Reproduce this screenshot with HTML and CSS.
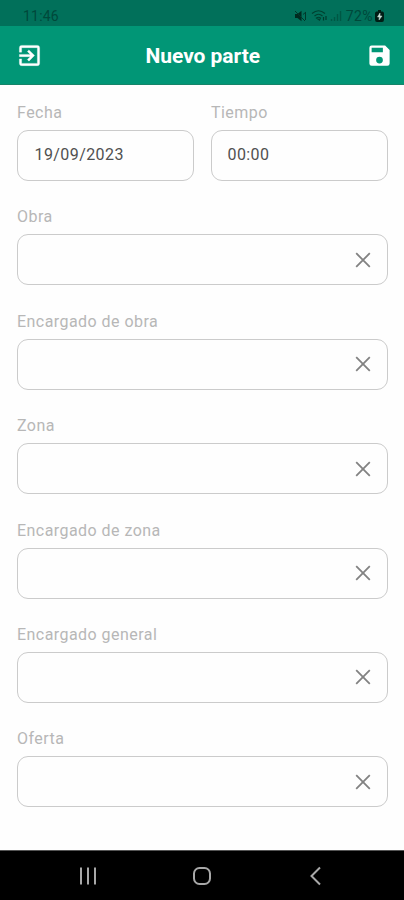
FILE: index.html
```html
<!DOCTYPE html>
<html lang="es">
<head>
<meta charset="utf-8">
<title>Nuevo parte</title>
<link rel="stylesheet" href="styles.css">
</head>
<body>
<svg class="defs" aria-hidden="true">
  <symbol id="clear" viewBox="0 0 16 16"><path d="M1.200 1.200 14.800 14.800M14.800 1.200 1.200 14.800" fill="none" stroke="currentColor" stroke-width="1.800"/></symbol>
</svg>
<div class="status">
  <span class="clock">11:46</span>
  <div class="indicators">
    <svg class="mute" viewBox="0 0 13 12"><path d="M1 4h2.500L7.500 .8v10.400L3.500 8H1z" fill="#002b20"/><path d="M1 1l10 10M9 4.500l3-2.500M11.500 2v8" stroke="#00392b" fill="none"/></svg>
    <svg class="wifi" viewBox="0 0 18 13"><path d="M1 4.500Q7.500-1 14 4.500M3.500 7Q7.500 3.500 11.500 7M5.500 9Q7.500 7.500 9.500 9L8.500 11z" fill="none" stroke="#00402f" stroke-width="1.200"/><path d="M12.500 8v3.500M15 7v4" stroke="#00392b" stroke-width="1.200"/></svg>
    <svg class="signal" viewBox="0 0 12 11"><path d="M1.500 9v2M4.500 7v4M7.500 4v7M10.500 1v10" stroke="#005744" stroke-width="1.400"/></svg>
    <span class="percent">72%</span>
    <svg class="battery" viewBox="0 0 9 12"><path d="M3 0h3v1.500h1.500Q9 2 9 3.500v6Q9 12 7 12H2Q0 12 0 9.500v-6Q0 2 1.500 1.500H3z" fill="#001d15"/><path d="M5 3 2.500 7h1.800L4 10l3-4H5z" fill="#c5ddd5" stroke="#c5ddd5" stroke-width=".5"/></svg>
  </div>
</div>
<header class="appbar">
  <svg class="action" viewBox="0 0 24 24"><path fill="#fff" stroke="#fff" stroke-width=".3" d="M10.090 15.590 11.500 17l5-5-5-5-1.410 1.410L12.670 11H3v2h9.670zM19 3H5a2 2 0 0 0-2 2v4h2V5h14v14H5v-4H3v4a2 2 0 0 0 2 2h14a2 2 0 0 0 2-2V5a2 2 0 0 0-2-2z"/></svg>
  <h1>Nuevo parte</h1>
  <svg class="action" viewBox="0 0 24 24"><path fill="#fff" d="M17 3H5a2 2 0 0 0-2 2v14a2 2 0 0 0 2 2h14a2 2 0 0 0 2-2V7zm-5 16a3 3 0 1 1 0-6 3 3 0 0 1 0 6zm3-10H5V5h10z"/></svg>
</header>
<main>
  <div class="pair">
    <div class="field"><div class="label">Fecha</div><div class="box"><span>19/09/2023</span></div></div>
    <div class="field"><div class="label">Tiempo</div><div class="box time"><span>00:00</span></div></div>
  </div>
  <div class="field"><div class="label">Obra</div><div class="box"><svg class="clear"><use href="#clear"/></svg></div></div>
  <div class="field"><div class="label">Encargado de obra</div><div class="box"><svg class="clear"><use href="#clear"/></svg></div></div>
  <div class="field"><div class="label">Zona</div><div class="box"><svg class="clear"><use href="#clear"/></svg></div></div>
  <div class="field"><div class="label">Encargado de zona</div><div class="box"><svg class="clear"><use href="#clear"/></svg></div></div>
  <div class="field"><div class="label">Encargado general</div><div class="box"><svg class="clear"><use href="#clear"/></svg></div></div>
  <div class="field"><div class="label">Oferta</div><div class="box"><svg class="clear"><use href="#clear"/></svg></div></div>
</main>
<nav class="navbar">
  <svg viewBox="0 0 20 20"><path d="M3 1.500v17M10 1.500v17M17 1.500v17" stroke="#a8a8a8" stroke-width="2"/></svg>
  <svg viewBox="0 0 20 20"><rect x="2" y="2" width="16" height="16" rx="5.500" fill="none" stroke="#a8a8a8" stroke-width="2"/></svg>
  <svg viewBox="0 0 20 20"><path d="M15 1.500 6.500 10l8.500 8.500" fill="none" stroke="#a8a8a8" stroke-width="2"/></svg>
</nav>
</body>
</html>
```
FILE: styles.css
```css
* { box-sizing: border-box; }
body {
  margin: 0;
  height: 900px;
  display: flex;
  flex-direction: column;
  overflow: hidden;
  background: #fefefe;
  font-family: Roboto, "Liberation Sans", sans-serif;
}
svg { display: block; flex: none; }
.defs { display: none; }
.status {
  height: 26px;
  flex: none;
  display: flex;
  justify-content: space-between;
  align-items: center;
  padding: 5px 20px 0 23px;
  background: #01705a;
  color: #00483a;
  font-size: 14px;
}
.clock { letter-spacing: 0.2px; }
.indicators { display: flex; align-items: center; }
.mute { width: 13px; height: 12px; margin-right: 4px; }
.wifi { width: 18px; height: 13px; margin-right: 1px; }
.signal { width: 12px; height: 11px; margin-right: 4px; }
.percent { margin-right: 2px; letter-spacing: 0.4px; }
.battery { width: 9px; height: 12px; }
.appbar {
  height: 59px;
  flex: none;
  display: flex;
  justify-content: space-between;
  align-items: center;
  padding: 0 11.5px 0 16px;
  background: #019676;
  border-bottom: 1px solid #168469;
}
.action { width: 27px; height: 27px; }
h1 {
  margin: 0;
  padding: 2px 3px 0 0;
  color: #fff;
  font-size: 21px;
  font-weight: 700;
  letter-spacing: -0.05px;
}
main { flex: 1; padding: 9px 16px 0 17px; }
.pair { display: grid; grid-template-columns: 1fr 1fr; gap: 17px; }
.field { height: 104.4px; }
.label {
  height: 36px;
  line-height: 37px;
  color: #b7b7b7;
  font-size: 16px;
  letter-spacing: 0.45px;
}
.box {
  height: 51px;
  display: flex;
  align-items: center;
  justify-content: flex-end;
  border: 1.500px solid #cbcbcb;
  border-radius: 11px;
  padding: 0 16.500px;
  color: #505050;
  font-size: 16px;
}
.box.time { padding-left: 15.5px; }
.box span { margin-right: auto; margin-top: -2px; letter-spacing: 0.42px; }
.clear { width: 16px; height: 16px; color: #828282; }
.navbar {
  height: 50px;
  flex: none;
  display: flex;
  justify-content: space-between;
  align-items: center;
  padding: 1px 79px 0 78px;
  background: #000;
  border-top: 1px solid #555;
}
.navbar svg { width: 20px; height: 20px; }
```
